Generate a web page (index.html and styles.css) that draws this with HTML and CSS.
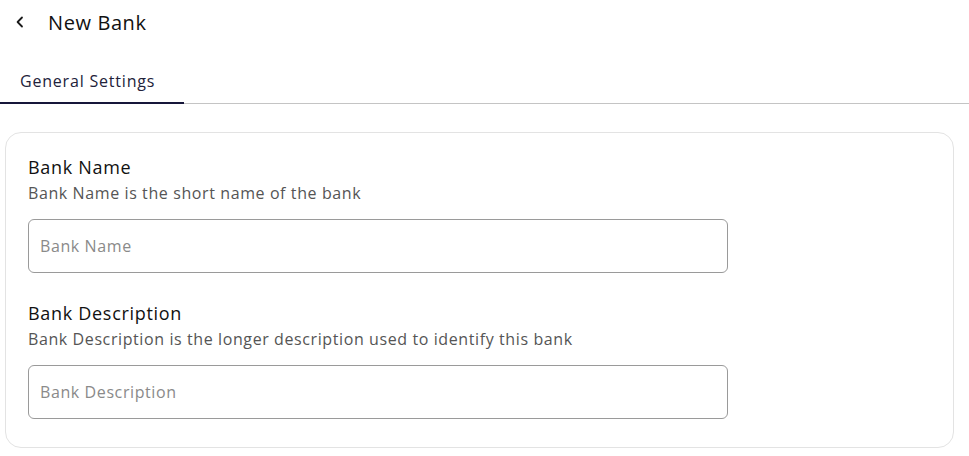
FILE: index.html
```html
<!DOCTYPE html>
<html>
<head>
<meta charset="utf-8">
<link rel="stylesheet" href="styles.css">
</head>
<body>
<header class="topbar">
  <button class="back" aria-label="Back">
    <svg width="10" height="12" viewBox="0 0 10 12"><path d="M7 1.5 L2.6 6 L7 10.5" fill="none" stroke="#1a1a1a" stroke-width="1.8" stroke-linecap="round" stroke-linejoin="round"/></svg>
  </button>
  <h1 class="title">New Bank</h1>
</header>
<nav class="tabs">
  <div class="tab active">General Settings</div>
</nav>
<main class="content">
  <section class="card">
    <div class="field">
      <div class="label">Bank Name</div>
      <div class="help">Bank Name is the short name of the bank</div>
      <input class="input" type="text" placeholder="Bank Name">
    </div>
    <div class="field">
      <div class="label">Bank Description</div>
      <div class="help">Bank Description is the longer description used to identify this bank</div>
      <input class="input" type="text" placeholder="Bank Description">
    </div>
  </section>
</main>
</body>
</html>
```
FILE: styles.css
```css
* { box-sizing: border-box; }
html, body { margin: 0; background: #fff; }
body {
  font-family: "Open Sans", "DejaVu Sans", sans-serif;
  color: #111;
}
.topbar {
  display: flex;
  align-items: center;
  height: 44px;
  padding-left: 14px;
}
.back {
  border: 0;
  background: none;
  padding: 0;
  width: 12px;
  height: 14px;
  display: flex;
  align-items: center;
  justify-content: center;
  margin-right: 22px;
}
.title {
  margin: 0;
  font-size: 20px;
  font-weight: 500;
  color: #111;
  letter-spacing: 0.6px;
}
.tabs {
  display: flex;
  margin-top: 26px;
  border-bottom: 1px solid #c4c4c4;
}
.tab {
  width: 184px;
  padding: 0 0 10px 20px;
  font-size: 16px;
  font-weight: 500;
  color: #22223a;
  line-height: 22px;
  letter-spacing: 0.8px;
}
.tab.active {
  border-bottom: 2px solid #16163a;
  margin-bottom: -1px;
}
.content {
  padding: 28px 15px 10px 5px;
}
.card {
  border: 1px solid #e3e3e3;
  border-radius: 16px;
  padding: 22px 22px 28px;
}
.field + .field { margin-top: 28px; }
.label {
  font-size: 18px;
  font-weight: 500;
  color: #111;
  line-height: 24px;
  letter-spacing: 0.7px;
}
.help {
  font-size: 16px;
  color: #555;
  line-height: 22px;
  margin-top: 3px;
  letter-spacing: 0.6px;
}
.input {
  display: block;
  width: 700px;
  height: 54px;
  margin-top: 15px;
  border: 1px solid #9a9a9a;
  border-radius: 6px;
  padding: 0 11px;
  font-family: inherit;
  font-size: 16px;
  letter-spacing: 0.6px;
  color: #222;
  outline: none;
}
.input::placeholder { color: #8a8a8a; }
```
